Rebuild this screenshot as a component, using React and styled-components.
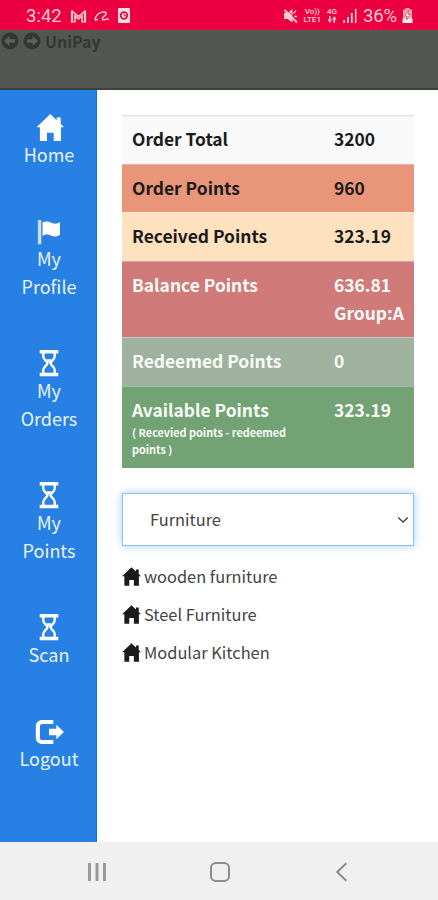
import styled, { createGlobalStyle } from "styled-components";

const COLORS = {
    STATUS: "#ec0040",
    STATUS_TEXT: "#ffc9d2",
    HEADER: "#525752",
    HEADER_TEXT: "#333733",
    SIDEBAR: "#2780e3",
    SIDEBAR_EDGE: "#1470dc",
    NAV: "#f0f0f0",
    NAV_ICON: "#8c8c8c",
    DARK: "#1b1b1b",
};

const FONT = `"Noto Sans CJK SC", "Open Sans", sans-serif`;

const SIDEBAR_ITEMS = [
    { icon: "home", lines: ["Home"] },
    { icon: "flag", lines: ["My", "Profile"] },
    { icon: "hourglass", lines: ["My", "Orders"] },
    { icon: "hourglass", lines: ["My", "Points"] },
    { icon: "hourglass", lines: ["Scan"] },
    { icon: "logout", lines: ["Logout"] },
];

const ROWS = [
    { label: "Order Total", values: ["3200"], background: "#f9f9f9", height: 48 },
    { label: "Order Points", values: ["960"], background: "#e99579", height: 48 },
    { label: "Received Points", values: ["323.19"], background: "#fee2c0", height: 49 },
    { label: "Balance Points", values: ["636.81", "Group:A"], background: "#d07a7a", light: true, height: 76 },
    { label: "Redeemed Points", values: ["0"], background: "#9fb2a0", light: true, height: 49 },
    {
        label: "Available Points",
        note: "( Recevied points - redeemed points )",
        values: ["323.19"],
        background: "#73a375",
        light: true,
        height: 82,
    },
];

const CATEGORIES = ["wooden furniture", "Steel Furniture", "Modular Kitchen"];

const HomeIcon = () => (
    <path d="M16.3 1 2.6 14.3H5.9V28H13V19.7H19.7V28H27V14.3H30L26.7 11V4.5H22.7V7.2Z" />
);

const ICONS = {
    home: <HomeIcon />,
    flag: (
        <>
            <path d="M3.9 3h3.4v24.3H3.9z" opacity="0.75" />
            <path d="M8.6 5.6C12 3.6 15 4.6 18 6c3 1.3 5.4 .8 8-.9v12.6c-3 2-5.6 2.3-8.6 1-3-1.4-5.8-1.7-8.8.4z" />
        </>
    ),
    hourglass: (
        <>
            <path d="M5.7 1h18.6v3.6H5.7zM5.7 23.7h18.6v3.6H5.7z" />
            <path
                d="M9.3 4v3.600c0 3.200 4.200 4.800 4.200 6.600s-4.200 3.400-4.200 6.600V24M20.700 4v3.600c0 3.200-4.200 4.800-4.200 6.600s4.200 3.400 4.200 6.600V24"
                fill="none"
                stroke="#fff"
                strokeWidth="2.4"
            />
            <path d="M12.200 10.300h5.600L15 14z" />
        </>
    ),
    logout: (
        <>
            <path d="M19.3 3H8.500C4.500 3 1.800 5.600 1.800 9.500v11C1.800 24.400 4.500 27 8.500 27h10.800v-4H8.300C6.700 23 6 22.200 6 20.700V9.300C6 7.800 6.700 7 8.300 7h11z" />
            <path d="M15 11.700h7.300v-4L30 15l-7.700 7.300v-4H15z" />
        </>
    ),
};

export default function App() {
    return (
        <Screen>
            <GlobalStyle />
            <StatusBar />
            <Header>
                <CircleArrow />
                <CircleArrow flip />
                <Brand>UniPay</Brand>
            </Header>
            <Body>
                <Sidebar>
                    {SIDEBAR_ITEMS.map((item) => (
                        <SidebarLink key={item.lines.join()}>
                            <SidebarIcon viewBox="0 0 30 28">{ICONS[item.icon]}</SidebarIcon>
                            {item.lines.map((line) => (
                                <span key={line}>{line}</span>
                            ))}
                        </SidebarLink>
                    ))}
                </Sidebar>
                <Content>
                    <PointsTable>
                        {ROWS.map((row) => (
                            <PointsRow
                                key={row.label}
                                $background={row.background}
                                $light={row.light}
                                $height={row.height}
                            >
                                <Cell>
                                    {row.label}
                                    {row.note && <Note>{row.note}</Note>}
                                </Cell>
                                <Cell>
                                    {row.values.map((value) => (
                                        <div key={value}>{value}</div>
                                    ))}
                                </Cell>
                            </PointsRow>
                        ))}
                    </PointsTable>
                    <SelectBox>
                        <Select aria-label="category" defaultValue="Furniture">
                            <option>Furniture</option>
                        </Select>
                        <svg width="12" height="8" viewBox="0 0 12 8" fill="none" stroke="#444" strokeWidth="1.4">
                            <path d="M1.2 1.5 6 6l4.8-4.5" />
                        </svg>
                    </SelectBox>
                    <CategoryList>
                        {CATEGORIES.map((name) => (
                            <Category key={name}>
                                <svg width="19" height="19" viewBox="2.5 1 27.5 27" fill={COLORS.DARK}>
                                    <HomeIcon />
                                </svg>
                                {name}
                            </Category>
                        ))}
                    </CategoryList>
                </Content>
            </Body>
            <NavBar>
                <svg width="20" height="20" viewBox="0 0 20 20" stroke="#999" strokeWidth="3">
                    <path d="M2.5 1v18M10 1v18M17.5 1v18" />
                </svg>
                <svg width="20" height="20" viewBox="0 0 20 20" fill="none" stroke={COLORS.NAV_ICON} strokeWidth="2">
                    <rect x="1" y="1" width="18" height="18" rx="5" />
                </svg>
                <svg width="20" height="20" viewBox="0 0 20 20" fill="none" stroke={COLORS.NAV_ICON} strokeWidth="2">
                    <path d="M14.3 1.3 5.3 10l9 8.7" />
                </svg>
            </NavBar>
        </Screen>
    );
}

const CircleArrow = ({ flip }) => (
    <svg width="18" height="18" viewBox="0 0 18 18">
        <circle cx="9" cy="9" r="8.5" fill={COLORS.HEADER_TEXT} />
        <path
            d="M3 9l5.500-5v3.300H14v3.400H8.500V14z"
            fill="#5c605c"
            transform={flip ? "rotate(180 9 9)" : undefined}
        />
    </svg>
);

const StatusBar = () => (
    <StatusContainer>
        <StatusGroup>
            <Clock>3:42</Clock>
            <svg width="17" height="14" viewBox="0 0 17 14" fill="none" stroke="currentColor">
                <path d="M2 13.500V1.500M15 13.500V1.500" strokeWidth="2.2" />
                <path d="M2 2l6.500 5.500L15 2M5 13V7l3.500 3L12 7v6" strokeWidth="1.6" />
                <path d="M1 13h4.500M11.500 13H16" strokeWidth="1.2" />
            </svg>
            <svg width="16" height="14" viewBox="0 0 16 14" fill="none" stroke="currentColor" strokeWidth="1.5">
                <path d="M1 11c.5-4.500 4-8 8.500-8C12.500 3 13 4.500 11.500 6 10 7.500 8 8.500 8.300 10c.4 1.500 2.700.2 4.200.2h2.500M1 11.200l3-.7" />
            </svg>
            <RecorderIcon width="12" height="15" viewBox="0 0 12 15">
                <rect width="12" height="15" rx="1" fill="#ffdce2" />
                <circle cx="6" cy="7.5" r="3.3" fill="none" stroke="#d80f43" strokeWidth="1.7" />
                <path d="M6 5.500v2.300h2" fill="none" stroke="#d80f43" />
            </RecorderIcon>
        </StatusGroup>
        <StatusGroup $right>
            <svg width="15" height="16" viewBox="0 0 15 16" fill="currentColor">
                <path d="M1 5h3.500L9.500 1v13.500L4.500 11H1z" />
                <path d="M10.500 5.500 13 2.500M11 8.500h3" stroke="currentColor" strokeWidth="1.3" />
                <path d="M3.200 1 14.500 12.300" stroke={COLORS.STATUS} strokeWidth="0.8" />
                <path d="M1.500 2 14 14.500" stroke="currentColor" strokeWidth="2" />
            </svg>
            <Network>
                <span>Vo))</span>
                <span>LTE1</span>
            </Network>
            <Network>
                <span>4G</span>
                <svg width="10" height="7" viewBox="0 0 10 7" fill="currentColor">
                    <path d="M2 0h1.600v3.500H5L2.800 7 .5 3.500H2zM6.500 7h1.600V3.500h1.400L7.300 0 5 3.500h1.500z" />
                </svg>
            </Network>
            <svg width="14" height="15" viewBox="0 0 14 15" stroke="currentColor" strokeWidth="1.8">
                <path d="M1.200 12v3M5 9v6M8.800 5v10" />
                <path d="M12.700 1v14" strokeWidth="1.6" />
            </svg>
            <Percent>36%</Percent>
            <svg width="11" height="15" viewBox="0 0 11 15">
                <path d="M3.500 1.500V0h4v1.500H10V15H1V1.500z" fill="#ff9fb0" />
                <path d="M.5 10.500h10V15H.5z" fill="#fff0f2" />
                <path d="M6.500 2.500 3 8h2.300L4.500 12 8.300 6.500H6z" fill="#fff" stroke="#8b4753" strokeWidth=".6" />
            </svg>
        </StatusGroup>
    </StatusContainer>
);

const GlobalStyle = createGlobalStyle`
    * {
        box-sizing: border-box;
    }
    body {
        margin: 0;
        background: #fff;
    }
    svg {
        display: block;
        flex-shrink: 0;
    }
`;

const Screen = styled.div`
    display: flex;
    flex-direction: column;

    width: 438px;
    height: 900px;
    overflow: hidden;

    font-family: ${FONT};
`;

const StatusContainer = styled.div`
    display: flex;
    justify-content: space-between;

    height: 30px;
    padding: 1px 25px 0 26px;

    color: ${COLORS.STATUS_TEXT};
    background: ${COLORS.STATUS};
    font-family: Roboto, sans-serif;
`;

const StatusGroup = styled.div`
    display: flex;
    align-items: center;
    gap: ${({ $right }) => ($right ? "6px" : "7px")};
`;

const RecorderIcon = styled.svg`
    margin-left: 1px;
`;

const Clock = styled.span`
    width: 37px;
    font-size: 18.5px;
    white-space: nowrap;
`;

const Percent = styled.span`
    width: 33px;
    font-size: 18.5px;
    letter-spacing: -0.2px;
    white-space: nowrap;
`;

const Network = styled.div`
    display: flex;
    flex-direction: column;
    align-items: center;

    font-size: 8px;
    font-weight: 600;
    line-height: 8px;
`;

const Header = styled.header`
    display: flex;
    gap: 4px;

    height: 60px;
    padding: 2px 0 0 1px;

    background: ${COLORS.HEADER};
    border-bottom: 2px solid #3c403e;
`;

const Brand = styled.span`
    color: ${COLORS.HEADER_TEXT};
    font-size: 16px;
    font-weight: 700;
    line-height: 19px;
`;

const Body = styled.div`
    display: flex;
    height: 752px;
`;

const Sidebar = styled.nav`
    display: flex;
    flex-direction: column;
    gap: 48px;

    width: 97px;
    padding-top: 23px;

    background: ${COLORS.SIDEBAR};
    border-right: 1px solid ${COLORS.SIDEBAR_EDGE};
`;

const SidebarLink = styled.a`
    display: flex;
    flex-direction: column;
    align-items: center;

    padding: 0 0 1px 2px;

    color: #e9f3ff;
    font-size: 18px;
    line-height: 28px;
`;

const SidebarIcon = styled.svg`
    width: 30px;
    height: 28px;
    margin-bottom: -1px;
    fill: #fff;
`;

const Content = styled.main`
    width: 341px;
    padding: 25px 24px 0 25px;
`;

const PointsTable = styled.div`
    border-top: 1px solid #dcdcdc;
`;

const PointsRow = styled.div`
    display: grid;
    grid-template-columns: 202px 1fr;

    height: ${({ $height }) => $height}px;
    padding-top: 9px;

    color: ${({ $light }) => ($light ? "#f8fbf6" : COLORS.DARK)};
    background: ${({ $background }) => $background};
    font-size: 17.4px;
    font-weight: 700;
    line-height: 28px;

    & + & {
        padding-top: 8.5px;
        border-top: 1px solid rgba(255, 255, 255, 0.3);
    }
`;

const Cell = styled.div`
    padding-left: 10px;
    white-space: nowrap;
`;

const Note = styled.div`
    width: 170px;
    font-size: 10.85px;
    line-height: 17px;
    white-space: normal;
`;

const SelectBox = styled.div`
    display: flex;
    align-items: center;

    height: 53px;
    margin-top: 25px;
    padding-right: 4px;

    border: 1px solid #8dc1e8;
    box-shadow: 0 0 8px rgba(102, 175, 233, 0.6);
`;

const Select = styled.select`
    flex: 1;
    height: 100%;
    padding: 0 0 2px 27px;

    color: #444;
    background: transparent;
    border: none;
    outline: none;
    appearance: none;
    font-family: ${FONT};
    font-size: 16.4px;
`;

const CategoryList = styled.div`
    display: flex;
    flex-direction: column;
    gap: 10px;

    margin-top: 16px;
`;

const Category = styled.div`
    display: flex;
    align-items: center;
    gap: 3px;

    height: 28px;

    color: #444;
    font-size: 16.4px;
    line-height: 28px;
`;

const NavBar = styled.footer`
    display: flex;
    justify-content: space-between;
    align-items: center;

    height: 58px;
    padding: 2px 86px 0 87px;

    background: ${COLORS.NAV};
`;
